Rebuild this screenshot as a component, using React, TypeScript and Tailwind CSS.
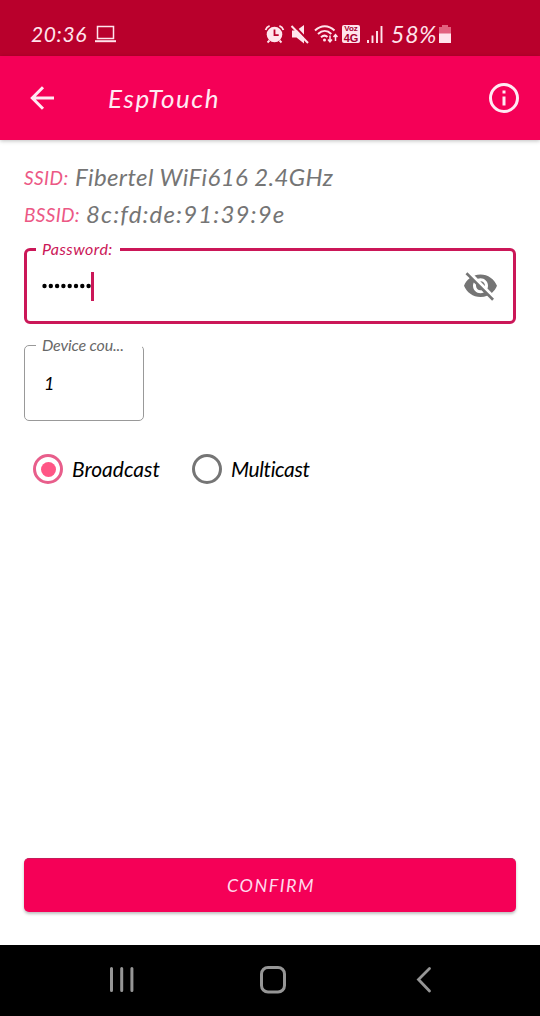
import React from "react";

function StatusBar() {
  return (
    <div className="flex h-14 shrink-0 items-start bg-[#b9002c] pt-[23px] text-[#ffe4ec]">
      <div className="ml-[31px] w-[63px] shrink-0 whitespace-nowrap text-[21px] leading-[22px] tracking-[0.6px]">20:36</div>
      <svg className="mt-[2px] h-[18px] w-[23px] shrink-0" viewBox="0 0 23 18" fill="none" stroke="currentColor">
        <path d="M3.5 1.5h16v12h-16z" strokeWidth="1.5" />
        <path d="M1 16.2h21" strokeWidth="2" />
      </svg>
      <svg className="ml-[147px] mt-[1px] h-5 w-[22px] shrink-0" viewBox="0 0 22 20">
        <circle cx="10.5" cy="10.5" r="7.8" fill="currentColor" />
        <path d="M1.6 6C2.2 4 3.6 2.5 5.6 1.8M19.4 6c-.6-2-2-3.500-4-4.200M5.500 16.500L3.500 18.500M15.500 16.500l2 2" stroke="currentColor" strokeWidth="1.8" fill="none" />
        <path d="M10.500 5.500v5.600h4.200" stroke="#b9002c" strokeWidth="1.8" fill="none" />
      </svg>
      <svg className="ml-[4px] mt-[1px] h-5 w-5 shrink-0" viewBox="0 0 20 20">
        <path d="M2 6.500h4.500L14 1v18.500l-7.500-6H2z" fill="currentColor" />
        <path d="M3.500 1l15 16" stroke="#b9002c" strokeWidth="2.200" />
        <path d="M1.500 2l16.500 17" stroke="currentColor" strokeWidth="2" />
      </svg>
      <svg className="ml-[4px] mt-[1px] h-5 w-6 shrink-0" viewBox="0 0 24 20" fill="none" stroke="currentColor" strokeWidth="2">
        <path d="M1 6.500C7 .8 14.500.8 20.500 6.500M4 10c4.200-4 9.300-4 13.300 0M7 13.200c2.300-2 4.600-2 6.500-.300" />
        <circle cx="10.500" cy="16" r="1.500" fill="currentColor" stroke="none" />
        <path d="M16 11.500v6m-2-2l2 2.300 2-2.300M21.500 17v-6m-2 2l2-2.300 2 2.300" strokeWidth="1.500" />
      </svg>
      <div className="ml-[4px] mt-[2px] flex h-[18px] w-[18px] shrink-0 flex-col items-center overflow-hidden rounded-[2px] bg-[#ffe4ec] font-['Liberation_Sans',sans-serif] font-bold not-italic text-[#a50030]">
        <span className="text-[8px] leading-[8px]">Voz</span>
        <span className="text-[11px] leading-[10px]">4G</span>
      </div>
      <svg className="ml-[6px] mt-[2px] h-[18px] w-[17px] shrink-0" viewBox="0 0 17 18" stroke="currentColor" strokeWidth="1.9">
        <path d="M2 18v-3M6.500 18v-7.500M11 18V6M15.500 18V1" />
      </svg>
      <div className="ml-[8px] w-[48px] shrink-0 whitespace-nowrap text-[23px] leading-[22px] tracking-[0.8px]">58%</div>
      <svg className="mt-[2px] h-[19px] w-3 shrink-0" viewBox="0 0 12 19">
        <path d="M3 0h6v2h3v7H0V2h3z" fill="#e2627f" />
        <path d="M0 8.500h12V18H0z" fill="currentColor" />
      </svg>
    </div>
  );
}

function AppBar() {
  return (
    <header className="relative flex h-[84px] shrink-0 items-center bg-[#f50057] text-[#ffeaf3] shadow-[0_1px_4px_rgba(0,0,0,0.25)]">
      <svg className="ml-[30px] h-6 w-6" viewBox="0 0 24 24" fill="none" stroke="currentColor" strokeWidth="3">
        <path d="M24 12H2M13 1.300L2.300 12 13 22.700" />
      </svg>
      <h1 className="ml-[54px] flex-1 text-[26px] leading-8 tracking-[1.6px]">EspTouch</h1>
      <svg className="mr-[21px] h-[30px] w-[30px]" viewBox="0 0 30 30" fill="none" stroke="currentColor" strokeWidth="3">
        <circle cx="15" cy="15" r="13.500" />
        <path d="M15 13.500v9M15 7.500v3" />
      </svg>
    </header>
  );
}

export default function App() {
  return (
    <div className="flex h-[1016px] w-[540px] flex-col overflow-hidden bg-white font-['Lato','Noto_Sans',sans-serif] italic">
      <StatusBar />
      <AppBar />
      <main className="flex flex-1 flex-col px-6 pt-[18px]">
        <div className="flex h-[37px] items-center whitespace-nowrap">
          <span className="w-[51px] pt-[3px] text-[19px] tracking-[0.4px] text-[#ec5885]">SSID:</span>
          <span className="text-[24px] tracking-[0.4px] text-[#757575]">Fibertel WiFi616 2.4GHz</span>
        </div>
        <div className="flex h-[37px] items-center whitespace-nowrap">
          <span className="w-[62px] pt-[3px] text-[19px] tracking-[0.3px] text-[#ec5885]">BSSID:</span>
          <span className="text-[24px] tracking-[1.15px] text-[#757575]">8c:fd:de:91:39:9e</span>
        </div>
        <fieldset className="mt-[8px] h-[84px] rounded-[6px] border-[3px] border-[#cb1758]">
          <legend className="ml-[9px] h-[19px] w-[84px] whitespace-nowrap pl-[6px] text-[16px] leading-[17px] tracking-[0.45px] text-[#cb1758]">Password:</legend>
          <div className="flex h-[54px] items-center pl-[15px] pr-4">
            <svg className="h-[6px] w-[49px] text-black" viewBox="0 0 49 6" fill="currentColor">
              {[2.5, 8.8, 15.1, 21.4, 27.7, 34, 40.3, 46.6].map((x) => (
                <circle key={x} cx={x} cy="3" r="2.200" />
              ))}
            </svg>
            <span className="h-[29px] w-[3px] bg-[#cb1758]" />
            <svg className="ml-auto h-[33px] w-[33px]" viewBox="1 1.500 22 22" fill="#757575">
              <path d="M12 7c2.760 0 5 2.240 5 5 0 .650-.130 1.260-.360 1.830l2.920 2.920c1.510-1.260 2.700-2.890 3.430-4.750-1.730-4.390-6-7.500-11-7.500-1.400 0-2.740.250-3.980.700l2.160 2.160C10.740 7.130 11.350 7 12 7zM2 4.270l2.280 2.280.46.46C3.080 8.300 1.780 10.020 1 12c1.730 4.390 6 7.500 11 7.500 1.550 0 3.030-.3 4.380-.84l.42.42L19.730 22 21 20.730 3.270 3 2 4.270zM7.530 9.800l1.550 1.550c-.05.21-.08.43-.08.65 0 1.660 1.340 3 3 3 .22 0 .44-.03.65-.08l1.550 1.550c-.67.33-1.410.53-2.200.53-2.760 0-5-2.240-5-5 0-.79.2-1.530.53-2.200zm4.310-.78l3.150 3.150.02-.16c0-1.660-1.340-3-3-3l-.17.01z" />
            </svg>
          </div>
        </fieldset>
        <fieldset className="mt-[11px] h-[86px] w-[120px] rounded-[5px] border border-[#999999]">
          <legend className="ml-[11px] h-5 w-[106px] whitespace-nowrap pl-[6px] text-[16px] leading-5 tracking-[-0.15px] text-[#686868]">Device cou...</legend>
          <div className="pl-[19px] pt-[14px] text-[18px] leading-7 text-black">1</div>
        </fieldset>
        <div className="mt-[33px] flex h-[30px] items-center text-[21px] text-black">
          <span className="ml-[9px] flex size-[30px] items-center justify-center rounded-full border-[3px] border-[#e85e8b]">
            <span className="size-[15px] rounded-full bg-[#ff5686]" />
          </span>
          <span className="ml-[9px] w-[120px]">Broadcast</span>
          <span className="size-[30px] rounded-full border-[3px] border-[#757575]" />
          <span className="ml-[9px] tracking-[-0.4px]">Multicast</span>
        </div>
        <button className="mb-[33px] mt-auto h-[54px] w-full rounded-[5px] border-t border-[#c51c59] bg-[#f50057] pl-[2px] text-[18px] italic tracking-[1.5px] text-[#ffd9ec] shadow-[0_2px_3px_rgba(0,0,0,0.25)]">
          CONFIRM
        </button>
      </main>
      <nav className="flex h-[71px] shrink-0 items-start bg-black pt-[21px] text-[#969696]">
        <svg className="ml-[109px] h-[27px] w-[26px]" viewBox="0 0 26 27" stroke="currentColor" strokeWidth="3" strokeLinecap="round">
          <path d="M2.500 2.500v22M12.700 2.500v22M22.900 2.500v22" />
        </svg>
        <svg className="ml-[124px] h-[28px] w-[28px]" viewBox="0 0 28 28" fill="none" stroke="currentColor" strokeWidth="3">
          <rect x="2.500" y="1.500" width="23" height="24.500" rx="6.500" />
        </svg>
        <svg className="ml-[128px] h-[28px] w-[18px]" viewBox="0 0 18 28" fill="none" stroke="currentColor" strokeWidth="2.800" strokeLinecap="round">
          <path d="M14.500 2.500L3.500 13.500 14.500 25" />
        </svg>
      </nav>
    </div>
  );
}
